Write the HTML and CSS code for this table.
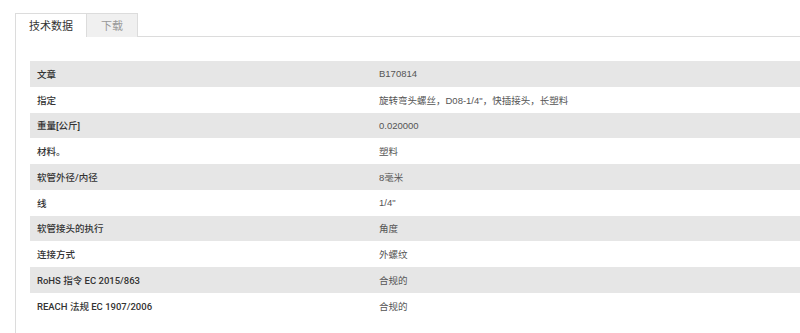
FILE: index.html
```html
<!DOCTYPE html>
<html lang="zh">
<head>
<meta charset="utf-8">
<link rel="stylesheet" href="styles.css">
</head>
<body>
<div class="wrap">
  <div class="tabs">
    <div class="tab active">技术数据</div>
    <div class="tab">下载</div>
  </div>
  <div class="panel">
    <table class="spec">
      <tr><td class="k">文章</td><td class="v">B170814</td></tr>
      <tr><td class="k">指定</td><td class="v">旋转弯头螺丝，D08-1/4"，快插接头，长塑料</td></tr>
      <tr><td class="k">重量[公斤]</td><td class="v">0.020000</td></tr>
      <tr><td class="k">材料。</td><td class="v">塑料</td></tr>
      <tr><td class="k">软管外径/内径</td><td class="v">8毫米</td></tr>
      <tr><td class="k">线</td><td class="v">1/4"</td></tr>
      <tr><td class="k">软管接头的执行</td><td class="v">角度</td></tr>
      <tr><td class="k">连接方式</td><td class="v">外螺纹</td></tr>
      <tr><td class="k">RoHS 指令 EC 2015/863</td><td class="v">合规的</td></tr>
      <tr><td class="k">REACH 法规 EC 1907/2006</td><td class="v">合规的</td></tr>
    </table>
  </div>
</div>
</body>
</html>
```
FILE: styles.css
```css
html, body {
  margin: 0;
  padding: 0;
  background: #fff;
}
body {
  font-family: "Noto Sans CJK SC", sans-serif;
}
.wrap {
  margin: 13px 0 0 15px;
}
.tabs {
  display: flex;
  border-bottom: 1px solid #dcdcdc;
  height: 23px;
}
.tab {
  box-sizing: border-box;
  height: 24px;
  border: 1px solid #dcdcdc;
  border-bottom: none;
  font-size: 11px;
  line-height: 22px;
  color: #999;
  background: #f0f0f0;
  width: 52px;
  text-align: center;
  margin-left: -1px;
}
.tab.active {
  width: 72px;
  margin-left: 0;
  background: #fff;
  color: #333;
  position: relative;
  z-index: 1;
}
.panel {
  border-left: 1px solid #dcdcdc;
  padding: 24px 0 30px 14px;
}
.spec {
  border-collapse: collapse;
  width: 100%;
  font-size: 9.5px;
}
.spec tr {
  height: 25.75px;
}
.spec tr:nth-child(odd) {
  background: #e6e6e6;
}
.spec td {
  padding: 0 0 0 7px;
  vertical-align: middle;
}
.spec .k {
  width: 335px;
  color: #333;
  font-family: "Roboto", "Noto Sans CJK SC", sans-serif;
  font-weight: 500;
}
.spec .v {
  color: #555;
  font-family: "Liberation Sans", "Noto Sans CJK SC", sans-serif;
}
```
